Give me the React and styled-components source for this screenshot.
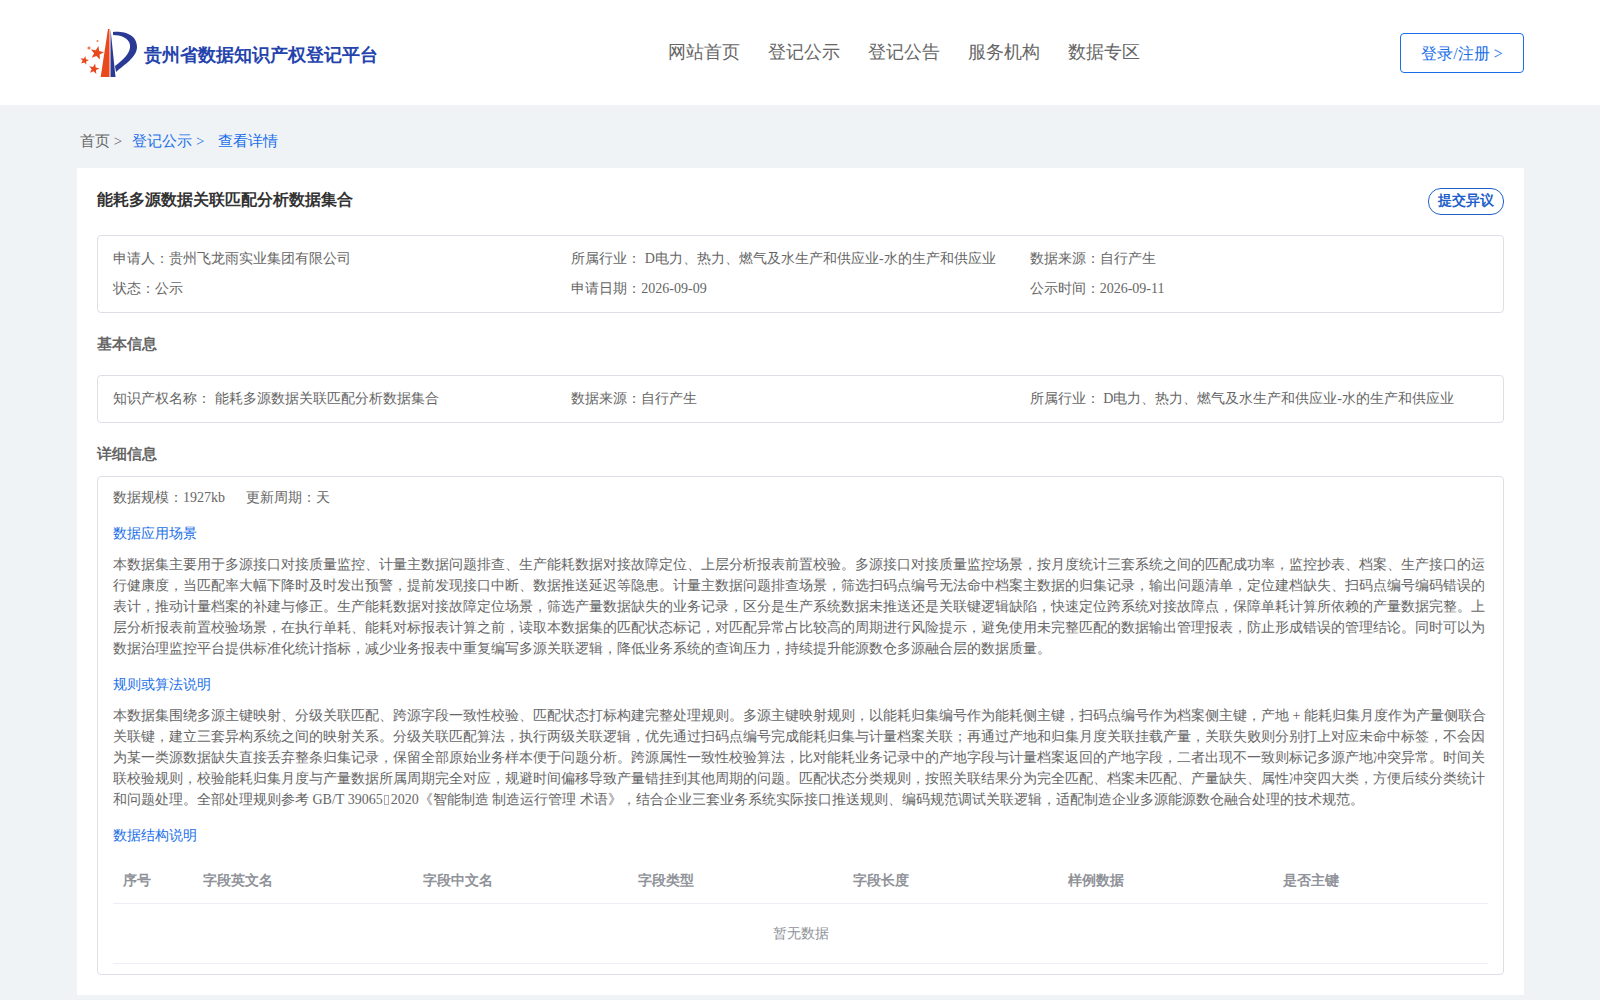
import React from 'react';
import styled, { createGlobalStyle } from 'styled-components';

const Global = createGlobalStyle`
  html, body { margin: 0; padding: 0; background: #eff3f6; }
  body { font-family: "Liberation Serif", serif; font-size: 14px; color: #666; }
`
const Header = styled.header`
  height: 105px;
  background: #fff;
  display: flex;
  align-items: center;
  padding: 0 76px 0 80px;
  justify-content: space-between;
`
const Brand = styled.div`
  display: flex;
  align-items: center;
  width: 480px;
`
const BrandName = styled.span`
  font-size: 18px;
  font-weight: 700;
  color: #2443ac;
  margin-left: 6px;
  margin-top: 4px;
`
const Nav = styled.nav`
  display: flex;
  gap: 28px;
  margin-right: 152px;
  margin-top: -1px;
`
const NavItem = styled.a`
  font-size: 18px;
  color: #666;
`
const Login = styled.button`
  width: 124px;
  height: 40px;
  padding: 3px 0 0;
  background: #fff;
  border: 1px solid #1a6fe8;
  border-radius: 4px;
  color: #1a6fe8;
  font: inherit;
  font-size: 16px;
`
const Crumbs = styled.div`
  height: 63px;
  box-sizing: border-box;
  padding: 27px 0 0 80px;
  font-size: 15px;
  color: #666;
  display: flex;
`
const Crumb = styled.span`
  color: ${p => (p.$link ? '#1a6fe8' : '#666')};
  margin-right: ${p => p.$gap}px;
`
const Panel = styled.main`
  margin: 0 76px 0 77px;
  background: #fff;
  padding: 20px 20px 20px;
`
const TitleRow = styled.div`
  display: flex;
  justify-content: space-between;
  align-items: flex-start;
  margin-bottom: 20px;
`
const Title = styled.h1`
  margin: 0;
  font-size: 16px;
  font-weight: 700;
  color: #333;
  line-height: 24px;
`
const Dissent = styled.button`
  width: 76px;
  height: 27px;
  padding: 0 0 1px;
  background: #fff;
  border: 1px solid #1f5fc9;
  border-radius: 13px;
  color: #1f5fc9;
  font: inherit;
  font-size: 14px;
  font-weight: 700;
`
const Box = styled.section`
  border: 1px solid #dcdfe6;
  border-radius: 4px;
  padding: ${p => p.$pad || '0 15px'};
`
const InfoGrid = styled.div`
  display: grid;
  grid-template-columns: repeat(3, 1fr);
  grid-auto-rows: 30px;
  align-items: center;
  padding: ${p => p.$pad};
`
const Section = styled.h2`
  margin: 0;
  font-size: 15px;
  font-weight: 700;
  color: #666;
  line-height: 22px;
  padding: ${p => p.$pad};
`
const Stats = styled.div`
  display: flex;
  gap: 21px;
  line-height: 21px;
`
const SubTitle = styled.h3`
  margin: 0;
  font-size: 14px;
  font-weight: 400;
  color: #1a6fe8;
  line-height: 21px;
  padding: ${p => p.$pad};
`
const Para = styled.p`
  margin: 0;
  line-height: 21px;
  color: #666;
  padding-top: 10px;
`
// the source text has a character here with no glyph, it shows as an empty box
const MissingGlyph = styled.span`
  display: inline-block;
  box-sizing: border-box;
  width: 5px;
  height: 10px;
  margin: 0 1.5px;
  border: 1px solid #aaa;
  vertical-align: -1px;
`
const Table = styled.table`
  width: 100%;
  border-collapse: collapse;
  table-layout: fixed;
  margin-top: 12px;
`
const Th = styled.th`
  text-align: left;
  height: 45px;
  padding: 0 0 0 ${p => p.$left || 0}px;
  color: #909399;
  font-weight: 700;
  border-bottom: 1px solid #ebeef5;
  width: ${p => p.$w};
`
const Empty = styled.td`
  height: 59px;
  padding: 0;
  text-align: center;
  color: #909399;
  border-bottom: 1px solid #ebeef5;
`

// five pointed star around a centre point
const starPoints = (cx, cy, r) =>
  Array.from({ length: 10 }, (_, i) => {
    const a = -Math.PI / 2 + 0.2 + (i * Math.PI) / 5
    const d = i % 2 ? r * 0.42 : r
    return `${(cx + d * Math.cos(a)).toFixed(1)},${(cy + d * Math.sin(a)).toFixed(1)}`
  }).join(' ')

const LogoMark = () => (
  <svg width="58" height="52" viewBox="0 0 58 52">
    <path d="M28 2 L29.500 2 L29.500 50 L20.700 50 Z" fill="#e8481c" />
    <path d="M30.500 2 L35.500 50 L30.500 50 Z" fill="#2a3a94" />
    <path d="M33 5 C45 4 57 8 57 20 C57 30 44 38 36 45 L35 39 C43 33 51 26 50 18 C49 11 41 8 33 8 Z" fill="#2a3a94" />
    <polygon points={starPoints(17, 26, 7)} fill="#e8481c" />
    <polygon points={starPoints(4.500, 33.500, 4.500)} fill="#e8481c" />
    <polygon points={starPoints(14, 42, 5.500)} fill="#e8481c" />
    <circle cx="9" cy="21" r="1.600" fill="#ee7a55" />
    <circle cx="17.500" cy="14" r="1" fill="#ee7a55" />
  </svg>
)

const columns = [
  ['序号', '80px', 10], ['字段英文名', '220px'], ['字段中文名', '215px'], ['字段类型', '215px'],
  ['字段长度', '215px'], ['样例数据', '215px'], ['是否主键', 'auto'],
]

export default function App() {
  return (
    <>
      <Global />
      <Header>
        <Brand>
          <LogoMark />
          <BrandName>贵州省数据知识产权登记平台</BrandName>
        </Brand>
        <Nav>
          {['网站首页', '登记公示', '登记公告', '服务机构', '数据专区'].map(n => <NavItem key={n}>{n}</NavItem>)}
        </Nav>
        <Login>登录/注册 &gt;</Login>
      </Header>
      <Crumbs>
        <Crumb $gap={10}>首页 &gt;</Crumb>
        <Crumb $link $gap={14}>登记公示 &gt;</Crumb>
        <Crumb $link>查看详情</Crumb>
      </Crumbs>
      <Panel>
        <TitleRow>
          <Title>能耗多源数据关联匹配分析数据集合</Title>
          <Dissent>提交异议</Dissent>
        </TitleRow>
        <Box>
          <InfoGrid $pad="8px 0 8px">
            <div>申请人：贵州飞龙雨实业集团有限公司</div>
            <div>所属行业： D电力、热力、燃气及水生产和供应业-水的生产和供应业</div>
            <div>数据来源：自行产生</div>
            <div>状态：公示</div>
            <div>申请日期：2026-09-09</div>
            <div>公示时间：2026-09-11</div>
          </InfoGrid>
        </Box>
        <Section $pad="20px 0 20px">基本信息</Section>
        <Box>
          <InfoGrid $pad="8px 0 8px">
            <div>知识产权名称： 能耗多源数据关联匹配分析数据集合</div>
            <div>数据来源：自行产生</div>
            <div>所属行业： D电力、热力、燃气及水生产和供应业-水的生产和供应业</div>
          </InfoGrid>
        </Box>
        <Section $pad="20px 0 11px">详细信息</Section>
        <Box $pad="10px 15px 10px">
          <Stats><span>数据规模：1927kb</span><span>更新周期：天</span></Stats>
          <SubTitle $pad="15px 0 0">数据应用场景</SubTitle>
          <Para>本数据集主要用于多源接口对接质量监控、计量主数据问题排查、生产能耗数据对接故障定位、上层分析报表前置校验。多源接口对接质量监控场景，按月度统计三套系统之间的匹配成功率，监控抄表、档案、生产接口的运行健康度，当匹配率大幅下降时及时发出预警，提前发现接口中断、数据推送延迟等隐患。计量主数据问题排查场景，筛选扫码点编号无法命中档案主数据的归集记录，输出问题清单，定位建档缺失、扫码点编号编码错误的表计，推动计量档案的补建与修正。生产能耗数据对接故障定位场景，筛选产量数据缺失的业务记录，区分是生产系统数据未推送还是关联键逻辑缺陷，快速定位跨系统对接故障点，保障单耗计算所依赖的产量数据完整。上层分析报表前置校验场景，在执行单耗、能耗对标报表计算之前，读取本数据集的匹配状态标记，对匹配异常占比较高的周期进行风险提示，避免使用未完整匹配的数据输出管理报表，防止形成错误的管理结论。同时可以为数据治理监控平台提供标准化统计指标，减少业务报表中重复编写多源关联逻辑，降低业务系统的查询压力，持续提升能源数仓多源融合层的数据质量。</Para>
          <SubTitle $pad="15px 0 0">规则或算法说明</SubTitle>
          <Para>本数据集围绕多源主键映射、分级关联匹配、跨源字段一致性校验、匹配状态打标构建完整处理规则。多源主键映射规则，以能耗归集编号作为能耗侧主键，扫码点编号作为档案侧主键，产地 + 能耗归集月度作为产量侧联合关联键，建立三套异构系统之间的映射关系。分级关联匹配算法，执行两级关联逻辑，优先通过扫码点编号完成能耗归集与计量档案关联；再通过产地和归集月度关联挂载产量，关联失败则分别打上对应未命中标签，不会因为某一类源数据缺失直接丢弃整条归集记录，保留全部原始业务样本便于问题分析。跨源属性一致性校验算法，比对能耗业务记录中的产地字段与计量档案返回的产地字段，二者出现不一致则标记多源产地冲突异常。时间关联校验规则，校验能耗归集月度与产量数据所属周期完全对应，规避时间偏移导致产量错挂到其他周期的问题。匹配状态分类规则，按照关联结果分为完全匹配、档案未匹配、产量缺失、属性冲突四大类，方便后续分类统计和问题处理。全部处理规则参考 GB/T 39065<MissingGlyph />2020《智能制造 制造运行管理 术语》，结合企业三套业务系统实际接口推送规则、编码规范调试关联逻辑，适配制造企业多源能源数仓融合处理的技术规范。</Para>
          <SubTitle $pad="15px 0 0">数据结构说明</SubTitle>
          <Table>
            <thead>
              <tr>{columns.map(([c, w, l]) => <Th key={c} $w={w} $left={l}>{c}</Th>)}</tr>
            </thead>
            <tbody>
              <tr><Empty colSpan={7}>暂无数据</Empty></tr>
            </tbody>
          </Table>
        </Box>
      </Panel>
    </>
  )
}
